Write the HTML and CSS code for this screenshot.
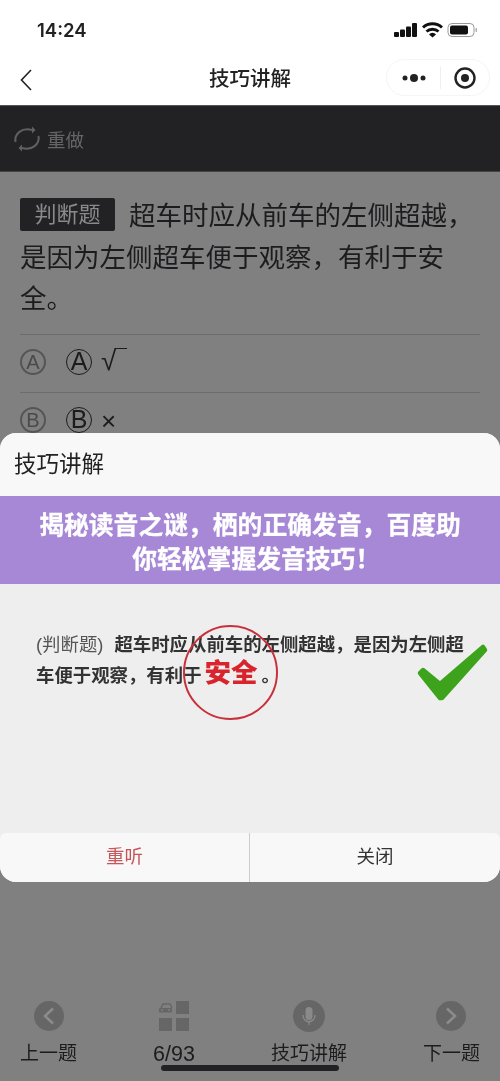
FILE: index.html
```html
<!doctype html>
<html>
<head>
	<meta charset="utf-8">
	<title>技巧讲解</title>
	<link rel="stylesheet" href="styles.css">
</head>

<body>
	<div class="page">
		<div class="status">
			<span class="time">14:24</span>
			<svg class="status-icons" width="86" height="16" viewBox="0 0 86 16">
				<rect x="0" y="10" width="5" height="5" rx="1" fill="#111"/>
				<rect x="6" y="7.5" width="5" height="7.5" rx="1" fill="#111"/>
				<rect x="12" y="4.5" width="5" height="10.5" rx="1" fill="#111"/>
				<rect x="18" y="1" width="5" height="14" rx="1" fill="#111"/>
				<path d="M29 5.500a14 14 0 0 1 19 0M32.500 9.500a9 9 0 0 1 12 0" fill="none" stroke="#111" stroke-width="3"/>
				<path d="M35 12.400a4.500 4.500 0 0 1 7 0L38.500 15.500z" fill="#111"/>
				<rect x="54" y="1.500" width="26" height="13" rx="4" fill="none" stroke="#999" stroke-width="1"/>
				<rect x="56" y="3.500" width="18" height="9" rx="2" fill="#111"/>
				<rect x="81.500" y="6" width="1.500" height="4" rx="0.700" fill="#aaa"/>
			</svg>
		</div>
		<div class="nav">
			<svg class="back" width="12" height="22" viewBox="0 0 12 22">
				<path d="M11 1 1.500 11 11 21" fill="none" stroke="#222" stroke-width="1.600"/>
			</svg>
			<span class="nav-title">技巧讲解</span>
			<div class="capsule">
				<svg width="24" height="10" viewBox="0 0 24 10">
					<circle cx="3" cy="5" r="2.500" fill="#222"/>
					<circle cx="12" cy="5" r="4" fill="#222"/>
					<circle cx="21" cy="5" r="2.500" fill="#222"/>
				</svg>
				<i class="capsule-line"></i>
				<svg width="22" height="22" viewBox="0 0 22 22">
					<circle cx="11" cy="11" r="9.500" fill="none" stroke="#222" stroke-width="2.400"/>
					<circle cx="11" cy="11" r="4" fill="#222"/>
				</svg>
			</div>
		</div>
		<div class="toolbar">
			<svg width="28" height="28" viewBox="0 0 28 28">
				<path d="M2.500 17C1 9 9 2 19 5M25.500 11c1.500 8-6.500 15-16.500 12" fill="none" stroke="#606060" stroke-width="2"/>
				<path d="M19 1.500v7l3.500-3.500zM9 19.500v7L5.500 23z" fill="#606060"/>
			</svg>
			<span>重做</span>
		</div>
		<div class="question"><span class="tag">判断题</span>超车时应从前车的左侧超越，是因为左侧超车便于观察，有利于安全。</div>
		<div class="option">
			<span class="mark">A</span>
			<span class="mark dark">A</span>
			<span class="value root">√<i class="root-bar"></i></span>
		</div>
		<div class="option">
			<span class="mark">B</span>
			<span class="mark dark">B</span>
			<span class="value">×</span>
		</div>

		<div class="tabs">
			<div class="tab">
				<svg width="32" height="32" viewBox="0 0 32 32">
					<circle cx="16" cy="16" r="15" fill="#666"/>
					<path d="M20 8.500 12 16 20 23.500" fill="none" stroke="#8c8c8c" stroke-width="2.500"/>
				</svg>
				<span>上一题</span>
			</div>
			<div class="tab">
				<svg width="32" height="32" viewBox="0 0 32 32">
					<path d="M3 8l2-4h7l2 4" fill="none" stroke="#666" stroke-width="1.500"/>
					<rect x="1" y="8" width="13" height="4.500" rx="1" fill="#666"/>
					<circle cx="4" cy="10" r="1" fill="#808080"/>
					<circle cx="11" cy="10" r="1" fill="#808080"/>
					<rect x="18" y="1" width="13" height="13" fill="#666"/>
					<rect x="1" y="18" width="13" height="13" fill="#666"/>
					<rect x="18" y="18" width="13" height="13" fill="#666"/>
				</svg>
				<span class="count">6/93</span>
			</div>
			<div class="tab">
				<svg width="32" height="32" viewBox="0 0 32 32">
					<circle cx="16" cy="16" r="16" fill="#666"/>
					<rect x="12.500" y="7" width="7" height="13" rx="3.500" fill="#8a8a8a"/>
					<path d="M10 15c0 9 12 9 12 0M16 21v4" fill="none" stroke="#8a8a8a" stroke-width="1.300"/>
				</svg>
				<span>技巧讲解</span>
			</div>
			<div class="tab">
				<svg width="32" height="32" viewBox="0 0 32 32">
					<circle cx="16" cy="16" r="15" fill="#666"/>
					<path d="M12 8.500 20 16 12 23.500" fill="none" stroke="#8c8c8c" stroke-width="2.500"/>
				</svg>
				<span>下一题</span>
			</div>
		</div>
		<div class="home-bar"></div>

		<div class="dialog">
			<div class="dialog-head">技巧讲解</div>
			<div class="banner">揭秘读音之谜，栖的正确发音，百度助你轻松掌握发音技巧<span class="half">！</span></div>
			<div class="dialog-body">
				<p class="tip"><span class="tip-tag">(判断题)</span>超车时应从前车的左侧超越，是因为左侧超车便于观察，有利于<b class="tip-red">安全</b>。</p>
				<i class="ring"></i>
				<svg class="tick" width="76" height="62" viewBox="0 0 76 62">
					<path d="M6 31 9 28 26 42 69 5 71 8 28 56 26 56z" fill="#3da31c" stroke="#3da31c" stroke-width="4.500" stroke-linejoin="round"/>
				</svg>
			</div>
			<div class="dialog-foot">
				<div class="foot-btn red">重听</div>
				<div class="foot-btn">关闭</div>
			</div>
		</div>
	</div>
</body>
</html>
```

FILE: styles.css
```css
* {
	box-sizing: border-box;
}
body {
	margin: 0;
	font-family: "Liberation Sans", "Noto Sans CJK SC", sans-serif;
}
.page {
	position: relative;
	display: flex;
	flex-direction: column;
	width: 500px;
	height: 1081px;
	overflow: hidden;
	background-color: #808080;
	color: #1c1c1e;
	filter: blur(0.35px);
}
.status {
	display: flex;
	justify-content: space-between;
	align-items: center;
	height: 56px;
	padding: 4px 20px 0 37px;
	background-color: #fff;
}
.time {
	font-family: "Inter", sans-serif;
	font-size: 18.500px;
	font-weight: 600;
	color: #222;
}
.nav {
	position: relative;
	display: flex;
	justify-content: space-between;
	align-items: center;
	height: 50px;
	padding: 0 10px 6px 20px;
	background-color: #fff;
	border-bottom: 1px solid #555;
}
.back {
	margin-top: 4px;
}
.nav-title {
	position: absolute;
	left: 0;
	right: 0;
	top: 6px;
	text-align: center;
	font-size: 20.500px;
	font-weight: 500;
	color: #222;
}
.capsule {
	display: flex;
	justify-content: space-between;
	align-items: center;
	width: 104px;
	height: 37px;
	padding: 0 13px 0 15px;
	border: 1px solid #f5f5f5;
	border-radius: 19px;
}
.capsule-line {
	width: 1px;
	height: 22px;
	background-color: #eee;
}
.toolbar {
	display: flex;
	align-items: center;
	gap: 6px;
	height: 66px;
	padding-left: 13px;
	background-color: #222225;
	border-bottom: 1px solid #444;
	color: #666;
	font-size: 18.500px;
}
.question {
	height: 162px;
	padding: 24px 16px 0 20px;
	font-size: 26.500px;
	line-height: 41.500px;
}
.tag {
	display: inline-block;
	width: 95px;
	height: 33px;
	margin-right: 14px;
	background-color: #222225;
	border-radius: 2px;
	color: #8a8a8a;
	font-size: 22px;
	line-height: 33px;
	text-align: center;
	vertical-align: 3px;
}
.option {
	display: flex;
	align-items: center;
	height: 58px;
	margin: 0 20px;
	padding-bottom: 4px;
	border-top: 1px solid #6c6c6c;
}
.mark {
	width: 26px;
	height: 26px;
	margin-right: 20px;
	border: 2px solid #555;
	border-radius: 50%;
	color: #4a4a4a;
	font-size: 20px;
	line-height: 22px;
	text-align: center;
}
.mark.dark {
	margin-right: 9px;
	border-width: 1.500px;
	border-color: #1c1c1e;
	color: #1c1c1e;
	font-size: 25px;
	line-height: 23px;
}
.value {
	display: flex;
	margin-top: 4px;
	font-size: 26px;
}
.value.root {
	margin-top: -2px;
	font-size: 28px;
}
.root-bar {
	width: 11px;
	height: 1.500px;
	margin-top: 3px;
	background-color: #1c1c1e;
}
.tabs {
	display: flex;
	justify-content: space-between;
	margin-top: auto;
	margin-bottom: 13px;
	padding: 0 20px;
}
.tab {
	display: flex;
	flex-direction: column;
	align-items: center;
	gap: 8px;
	font-size: 19px;
	line-height: 28px;
}
.count {
	font-size: 21.500px;
}
.home-bar {
	position: absolute;
	left: 161px;
	bottom: 10px;
	width: 178px;
	height: 6px;
	background-color: #222225;
	border-radius: 3px;
}
.dialog {
	position: absolute;
	left: 0;
	top: 433px;
	width: 500px;
	height: 449px;
	display: flex;
	flex-direction: column;
	background-color: #eee;
	border-radius: 16px;
	overflow: hidden;
}
.dialog-head {
	height: 63px;
	padding-left: 14px;
	background-color: #f8f8f8;
	font-size: 22.500px;
	line-height: 63px;
	color: #222;
}
.banner {
	height: 88px;
	padding: 13px 30px;
	background-color: #a688d6;
	color: #fff;
	font-size: 24.800px;
	font-weight: 700;
	line-height: 34px;
	text-align: center;
	-webkit-text-stroke: 0.3px #fff;
}
.half {
	font-feature-settings: "halt";
}
.dialog-body {
	position: relative;
	flex: 1;
	padding: 45px 30px 0 36px;
}
.tip {
	margin: 0;
	font-size: 18.400px;
	font-weight: 700;
	line-height: 31px;
	color: #333;
}
.tip-tag {
	margin-right: 11px;
	font-weight: 400;
	color: #555;
}
.tip-red {
	margin: 0 4px 0 3px;
	font-size: 26.500px;
	line-height: 1;
	color: #d9232d;
}
.ring {
	position: absolute;
	left: 183px;
	top: 41px;
	width: 95px;
	height: 95px;
	border: 2px solid #c9303a;
	border-radius: 50%;
}
.tick {
	position: absolute;
	left: 414px;
	top: 58px;
}
.dialog-foot {
	display: flex;
	height: 49px;
	background-color: #f8f8f8;
	border-radius: 6px 6px 0 0;
}
.foot-btn {
	flex: 1;
	font-size: 18.500px;
	line-height: 47px;
	text-align: center;
	color: #333;
}
.foot-btn.red {
	flex: none;
	width: 250px;
	border-right: 1px solid #ccc;
	color: #c8555a;
}
```
